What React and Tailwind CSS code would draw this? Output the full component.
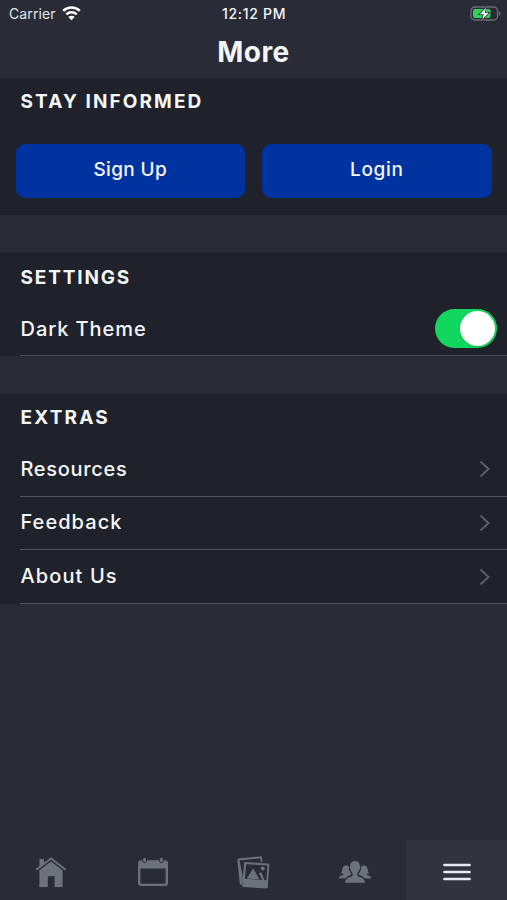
const font = "font-['Inter','Liberation_Sans',sans-serif]";

const WifiIcon = () => (
  <svg width="19" height="15" viewBox="0 0 19 15" className="ml-[6px]" fill="none" stroke="#fff">
    <path d="M1.2 4.900a12 12 0 0 1 16.600 0" strokeWidth="2.600" />
    <path d="M4.300 8.300a7.600 7.600 0 0 1 10.400 0" strokeWidth="2.400" />
    <path d="M9.500 14.200 6.300 11a4.500 4.500 0 0 1 6.400 0z" fill="#fff" stroke="none" />
  </svg>
);

const BatteryIcon = () => (
  <svg width="31" height="16" viewBox="0 0 31 16" fill="none">
    <rect x="1" y="1" width="26.5" height="13" rx="3.8" stroke="#6b6d75" strokeWidth="1.3" />
    <path d="M28.8 5.2v4.8c1-.4 1.6-1.3 1.6-2.4s-.6-2-1.600-2.400z" fill="#6b6d75" />
    <rect x="3" y="3" width="17.5" height="9" rx="2" fill="#30d158" />
    <path
      d="M16.2 1.8 9.8 8.3h4l-1.7 5.4 6.6-6.9h-4.1z"
      fill="#fff"
      stroke="#292b37"
      strokeWidth="1.6"
      paintOrder="stroke"
    />
  </svg>
);

const HomeIcon = () => (
  <svg width="32" height="32" viewBox="0 0 32 32" fill="currentColor">
    <path d="M4.500 3.100h4.500v3.900l-4.500 3.600z" />
    <path d="M1.300 13.700 16 2.400l14.700 11.300" fill="none" stroke="currentColor" strokeWidth="2" />
    <path d="M4.400 14.300 16 5.400l11.600 8.900V31h-8V20.300h-6.800V31H4.400z" />
  </svg>
);

const CalendarIcon = () => (
  <svg width="32" height="32" viewBox="0 0 32 32" fill="currentColor">
    <path
      fillRule="evenodd"
      d="M4 4.300h1.200c.1 3.700 4.700 3.700 4.800 0h12c.1 3.700 4.700 3.700 4.800 0H28a3 3 0 0 1 3 3V27a3 3 0 0 1-3 3H4a3 3 0 0 1-3-3V7.300a3 3 0 0 1 3-3zM3.400 12.500v14a1.300 1.300 0 0 0 1.300 1.300h22.600a1.300 1.300 0 0 0 1.300-1.300v-14z"
    />
    <rect x="6.200" y="1.800" width="2.800" height="4.400" rx="1.400" />
    <rect x="23" y="1.800" width="2.800" height="4.400" rx="1.400" />
  </svg>
);

const PhotosIcon = () => (
  <svg width="34" height="34" viewBox="0 0 34 34" fill="currentColor">
    <path d="M2.300 4.500 25 2.300l.7 4.500" fill="none" stroke="currentColor" strokeWidth="1.900" strokeLinejoin="round" />
    <path d="M1.300 4.500h2.100l3.600 18-1 7.700-2.200-1.300z" />
    <path
      fillRule="evenodd"
      d="M9.600 7 32 8.400a1.400 1.400 0 0 1 1.300 1.500l-1.600 22.300a1.400 1.400 0 0 1-1.500 1.300L7.500 32a1.400 1.400 0 0 1-1.300-1.500L8.100 8.300A1.400 1.400 0 0 1 9.600 7zM10.300 9.200 8.900 23.800l21.500 1.500 1-14.800z"
    />
    <path d="m10.800 23.500 6.400-10.300 6.300 11.200zM22.800 18.300l2.600-1 3 7.600-2.300-.2z" />
    <circle cx="26.700" cy="13.600" r="2" />
  </svg>
);

const PeopleIcon = () => (
  <svg width="34" height="24" viewBox="0 0 34 24" fill="currentColor">
    <path d="M17 1c3.300 0 5 2.300 4.800 5.300.8.500.6 2.800-.5 3.200-.4 1.900-1.100 2.900-1.900 3.800v2.100c0 1.700 7.600 1.400 7.600 7.300H7c0-5.900 7.600-5.600 7.600-7.300v-2.100c-.8-.9-1.500-1.900-1.900-3.800-1.100-.4-1.300-2.700-.5-3.200C12 3.300 13.700 1 17 1z" />
    <path d="M7.300 5.500c1.900-.4 3 .4 3.700 1.400-.4 1.600-.1 3.100.8 4.100.3 1.200.8 2.100 1.500 2.900-.1 1.500-4 1.700-5.700 4.500H.800c0-3.300 4.600-2.700 4.900-4.300-.7-.5-2-.5-2.800-.6 1.700-1.800.4-7.100 4.400-8z" />
    <path d="M26.700 5.500c-1.900-.4-3 .4-3.700 1.400.4 1.600.1 3.100-.8 4.100-.3 1.200-.8 2.100-1.500 2.900.1 1.500 4 1.700 5.700 4.500h6.800c0-3.300-4.600-2.700-4.900-4.300.7-.5 2-.5 2.800-.6-1.700-1.800-.4-7.100-4.400-8z" />
  </svg>
);

const MenuIcon = () => (
  <svg width="28" height="20" viewBox="0 0 28 20" stroke="#e9e9f1" strokeWidth="2.700" strokeLinecap="round">
    <path d="M1.500 3h25M1.500 10h25M1.500 17h25" />
  </svg>
);

const Chevron = () => (
  <svg width="12" height="18" viewBox="0 0 12 18" fill="none" stroke="#5b5e66" strokeWidth="2">
    <path d="m1.500 1.500 8 7.500-8 7.500" />
  </svg>
);

const extras = [
  { label: "Resources", spacing: "tracking-[0.68px]" },
  { label: "Feedback", spacing: "tracking-[1.05px]" },
  { label: "About Us", spacing: "tracking-[1.1px]" },
];

const App = () => {
  return (
    <div className={`${font} flex h-[900px] w-[507px] flex-col bg-[#282b33] text-[#f5f6f8]`}>
      <header className="h-[78px] bg-[#292b37]">
        <div className="grid h-[27px] grid-cols-3 items-center text-[14px]">
          <div className="flex items-center pl-[9px] text-[#e4e5ea]">
            <span className="tracking-[0.1px]">Carrier</span>
            <WifiIcon />
          </div>
          <span className="pl-px text-center font-medium tracking-[0.7px]">12:12 PM</span>
          <div className="flex justify-end pr-[6px]">
            <BatteryIcon />
          </div>
        </div>
        <h1 className="pt-[7px] text-center text-[28px] leading-[36px] font-bold tracking-[0.4px]">More</h1>
      </header>

      <section className="h-[137px] bg-[#1f222a]">
        <h2 className="pt-[12px] pl-[20.500px] text-[19px] leading-[24px] font-bold tracking-[2.1px]">STAY INFORMED</h2>
        <div className="mt-[30px] grid grid-cols-2 gap-[17px] px-[15.500px]">
          <button className="h-[54px] rounded-[9px] bg-[#0032a0] pb-[2px] text-[19px] font-medium tracking-[0.35px]">
            Sign Up
          </button>
          <button className="h-[54px] rounded-[9px] bg-[#0032a0] pb-[2px] text-[19px] font-medium tracking-[0.65px]">
            Login
          </button>
        </div>
      </section>

      <section className="mt-[38px] h-[103px] bg-[#1f222a]">
        <h2 className="pt-[13px] pl-[20.500px] text-[19px] leading-[24px] font-bold tracking-[1.85px]">SETTINGS</h2>
        <div className="mt-[12px] ml-[20px] flex h-[54px] items-center justify-between border-b-[1.500px] border-[#4b4d55] pr-[10px]">
          <span className="pl-[0.500px] text-[20px] font-medium tracking-[0.95px]">Dark Theme</span>
          <div className="flex h-[39px] w-[62px] items-center justify-end rounded-full bg-[#12d75e] pr-[2px]">
            <div className="size-[35px] rounded-full bg-white shadow" />
          </div>
        </div>
      </section>

      <section className="mt-[38px] h-[210px] bg-[#1f222a]">
        <h2 className="pt-[12px] pl-[20.500px] text-[19px] leading-[24px] font-bold tracking-[2.2px]">EXTRAS</h2>
        <div className="mt-[13px] ml-[20px]">
          {extras.map(({ label, spacing }) => (
            <div
              key={label}
              className="flex h-[53.670px] items-center justify-between border-b border-[#54565e] pr-[16px]"
            >
              <span className={`pb-px pl-[0.500px] text-[20px] font-medium ${spacing}`}>{label}</span>
              <Chevron />
            </div>
          ))}
        </div>
      </section>

      <nav className="mt-auto grid h-[60px] grid-cols-5 bg-[#292b37] text-[#6c727b]">
        <div className="flex items-center justify-center pt-[4px]">
          <HomeIcon />
        </div>
        <div className="flex items-center justify-center pt-[4px] pl-[1px]">
          <CalendarIcon />
        </div>
        <div className="flex items-center justify-center pt-[3px]">
          <PhotosIcon />
        </div>
        <div className="flex items-center justify-center pt-[4px] pl-[1px]">
          <PeopleIcon />
        </div>
        <div className="flex items-center justify-center bg-[#32333f] pt-[4px] pl-[1px]">
          <MenuIcon />
        </div>
      </nav>
    </div>
  );
};

export default App;
